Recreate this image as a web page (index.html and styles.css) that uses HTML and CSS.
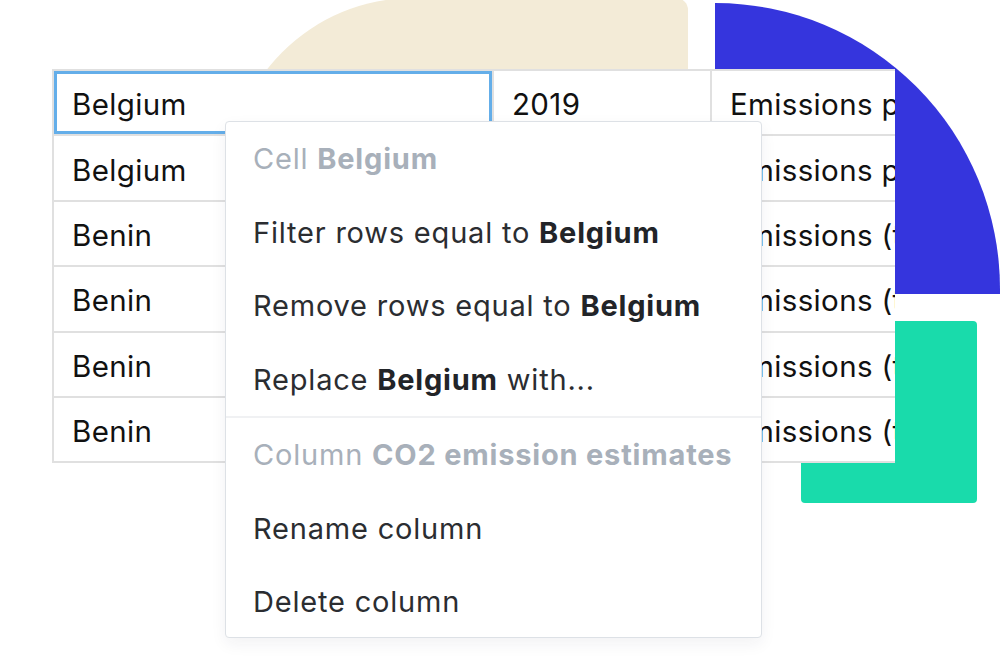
FILE: index.html
```html
<!DOCTYPE html>
<html lang="en">
<head>
    <meta charset="UTF-8">
    <meta name="viewport" content="width=device-width, initial-scale=1.0">
    <title>Cell context menu</title>
    <link rel="stylesheet" href="styles.css">
</head>
<body>
    <div class="stage">
        <!-- decorative shapes behind the sheet -->
        <div class="shape shape-sand"></div>
        <div class="shape shape-blue"></div>
        <div class="shape shape-green"></div>

        <div class="sheet">
            <div class="cell selected">Belgium</div>
            <div class="cell">2019</div>
            <div class="cell">Emissions per capita</div>

            <div class="cell">Belgium</div>
            <div class="cell">2019</div>
            <div class="cell">Emissions per capita</div>

            <div class="cell">Benin</div>
            <div class="cell">2017</div>
            <div class="cell">Emissions (thousand)</div>

            <div class="cell">Benin</div>
            <div class="cell">2017</div>
            <div class="cell">Emissions (thousand)</div>

            <div class="cell">Benin</div>
            <div class="cell">2018</div>
            <div class="cell">Emissions (thousand)</div>

            <div class="cell">Benin</div>
            <div class="cell">2019</div>
            <div class="cell">Emissions (thousand)</div>
        </div>

        <div class="menu">
            <div class="menu-title"><span>Cell <b>Belgium</b></span></div>
            <div class="menu-item"><span>Filter rows equal to <b>Belgium</b></span></div>
            <div class="menu-item"><span>Remove rows equal to <b>Belgium</b></span></div>
            <div class="menu-item"><span>Replace <b>Belgium</b> with...</span></div>
            <div class="menu-divider"></div>
            <div class="menu-title"><span>Column <b>CO2 emission estimates</b></span></div>
            <div class="menu-item"><span>Rename column</span></div>
            <div class="menu-item"><span>Delete column</span></div>
        </div>
    </div>
</body>
</html>
```

FILE: styles.css
```css
* {
    margin: 0;
    padding: 0;
    box-sizing: border-box;
}

body {
    background: #fff;
    font-family: Inter, "Noto Sans", sans-serif;
    overflow: hidden;
}

.stage {
    position: relative;
    width: 1000px;
    height: 667px;
    padding: 69px 0 0 52px;
}

.shape {
    position: absolute;
}

.shape-sand {
    left: 228px;
    top: -2px;
    width: 460px;
    height: 420px;
    background: #f3ebd7;
    border-radius: 185px 12px 0 0;
}

.shape-blue {
    left: 715px;
    top: 3px;
    width: 285px;
    height: 291px;
    background: #3535dd;
    border-top-right-radius: 290px 291px;
}

.shape-green {
    left: 801px;
    top: 321px;
    width: 176px;
    height: 182px;
    background: #19dbab;
    border-radius: 4px;
}

.sheet {
    position: relative;
    width: 843px;
    display: grid;
    grid-template-columns: 440px 218px 260px;
    grid-auto-rows: 65.4px;
    border-top: 2px solid #e0e0e0;
    border-left: 2px solid #e0e0e0;
    overflow: hidden;
    background: #fff;
}

.cell {
    display: flex;
    align-items: center;
    padding: 3px 0 0 18px;
    border-right: 2px solid #e0e0e0;
    border-bottom: 2px solid #e0e0e0;
    font-size: 29.5px;
    letter-spacing: 0.35px;
    color: #111;
    white-space: nowrap;
    overflow: hidden;
}

.cell.selected {
    box-shadow: inset 0 0 0 3px #64aee9;
}

.menu {
    position: absolute;
    left: 225px;
    top: 121px;
    width: 537px;
    background: #fff;
    border: 1.5px solid #dde1e6;
    border-radius: 4px;
    box-shadow: 0 6px 16px rgba(30, 40, 60, 0.06);
}

.menu-title,
.menu-item {
    height: 73.5px;
    display: flex;
    align-items: center;
    padding-left: 27px;
    font-size: 29px;
    letter-spacing: 0.8px;
    white-space: nowrap;
}

.menu-item:last-child {
    height: 72px;
}

.menu-title {
    color: #a8b0ba;
}

.menu-item {
    color: #2b2d31;
}

.menu b {
    font-weight: 700;
}

.menu-item b {
    color: #222428;
}

.menu-divider {
    height: 2px;
    background: #f0f1f3;
}
```
